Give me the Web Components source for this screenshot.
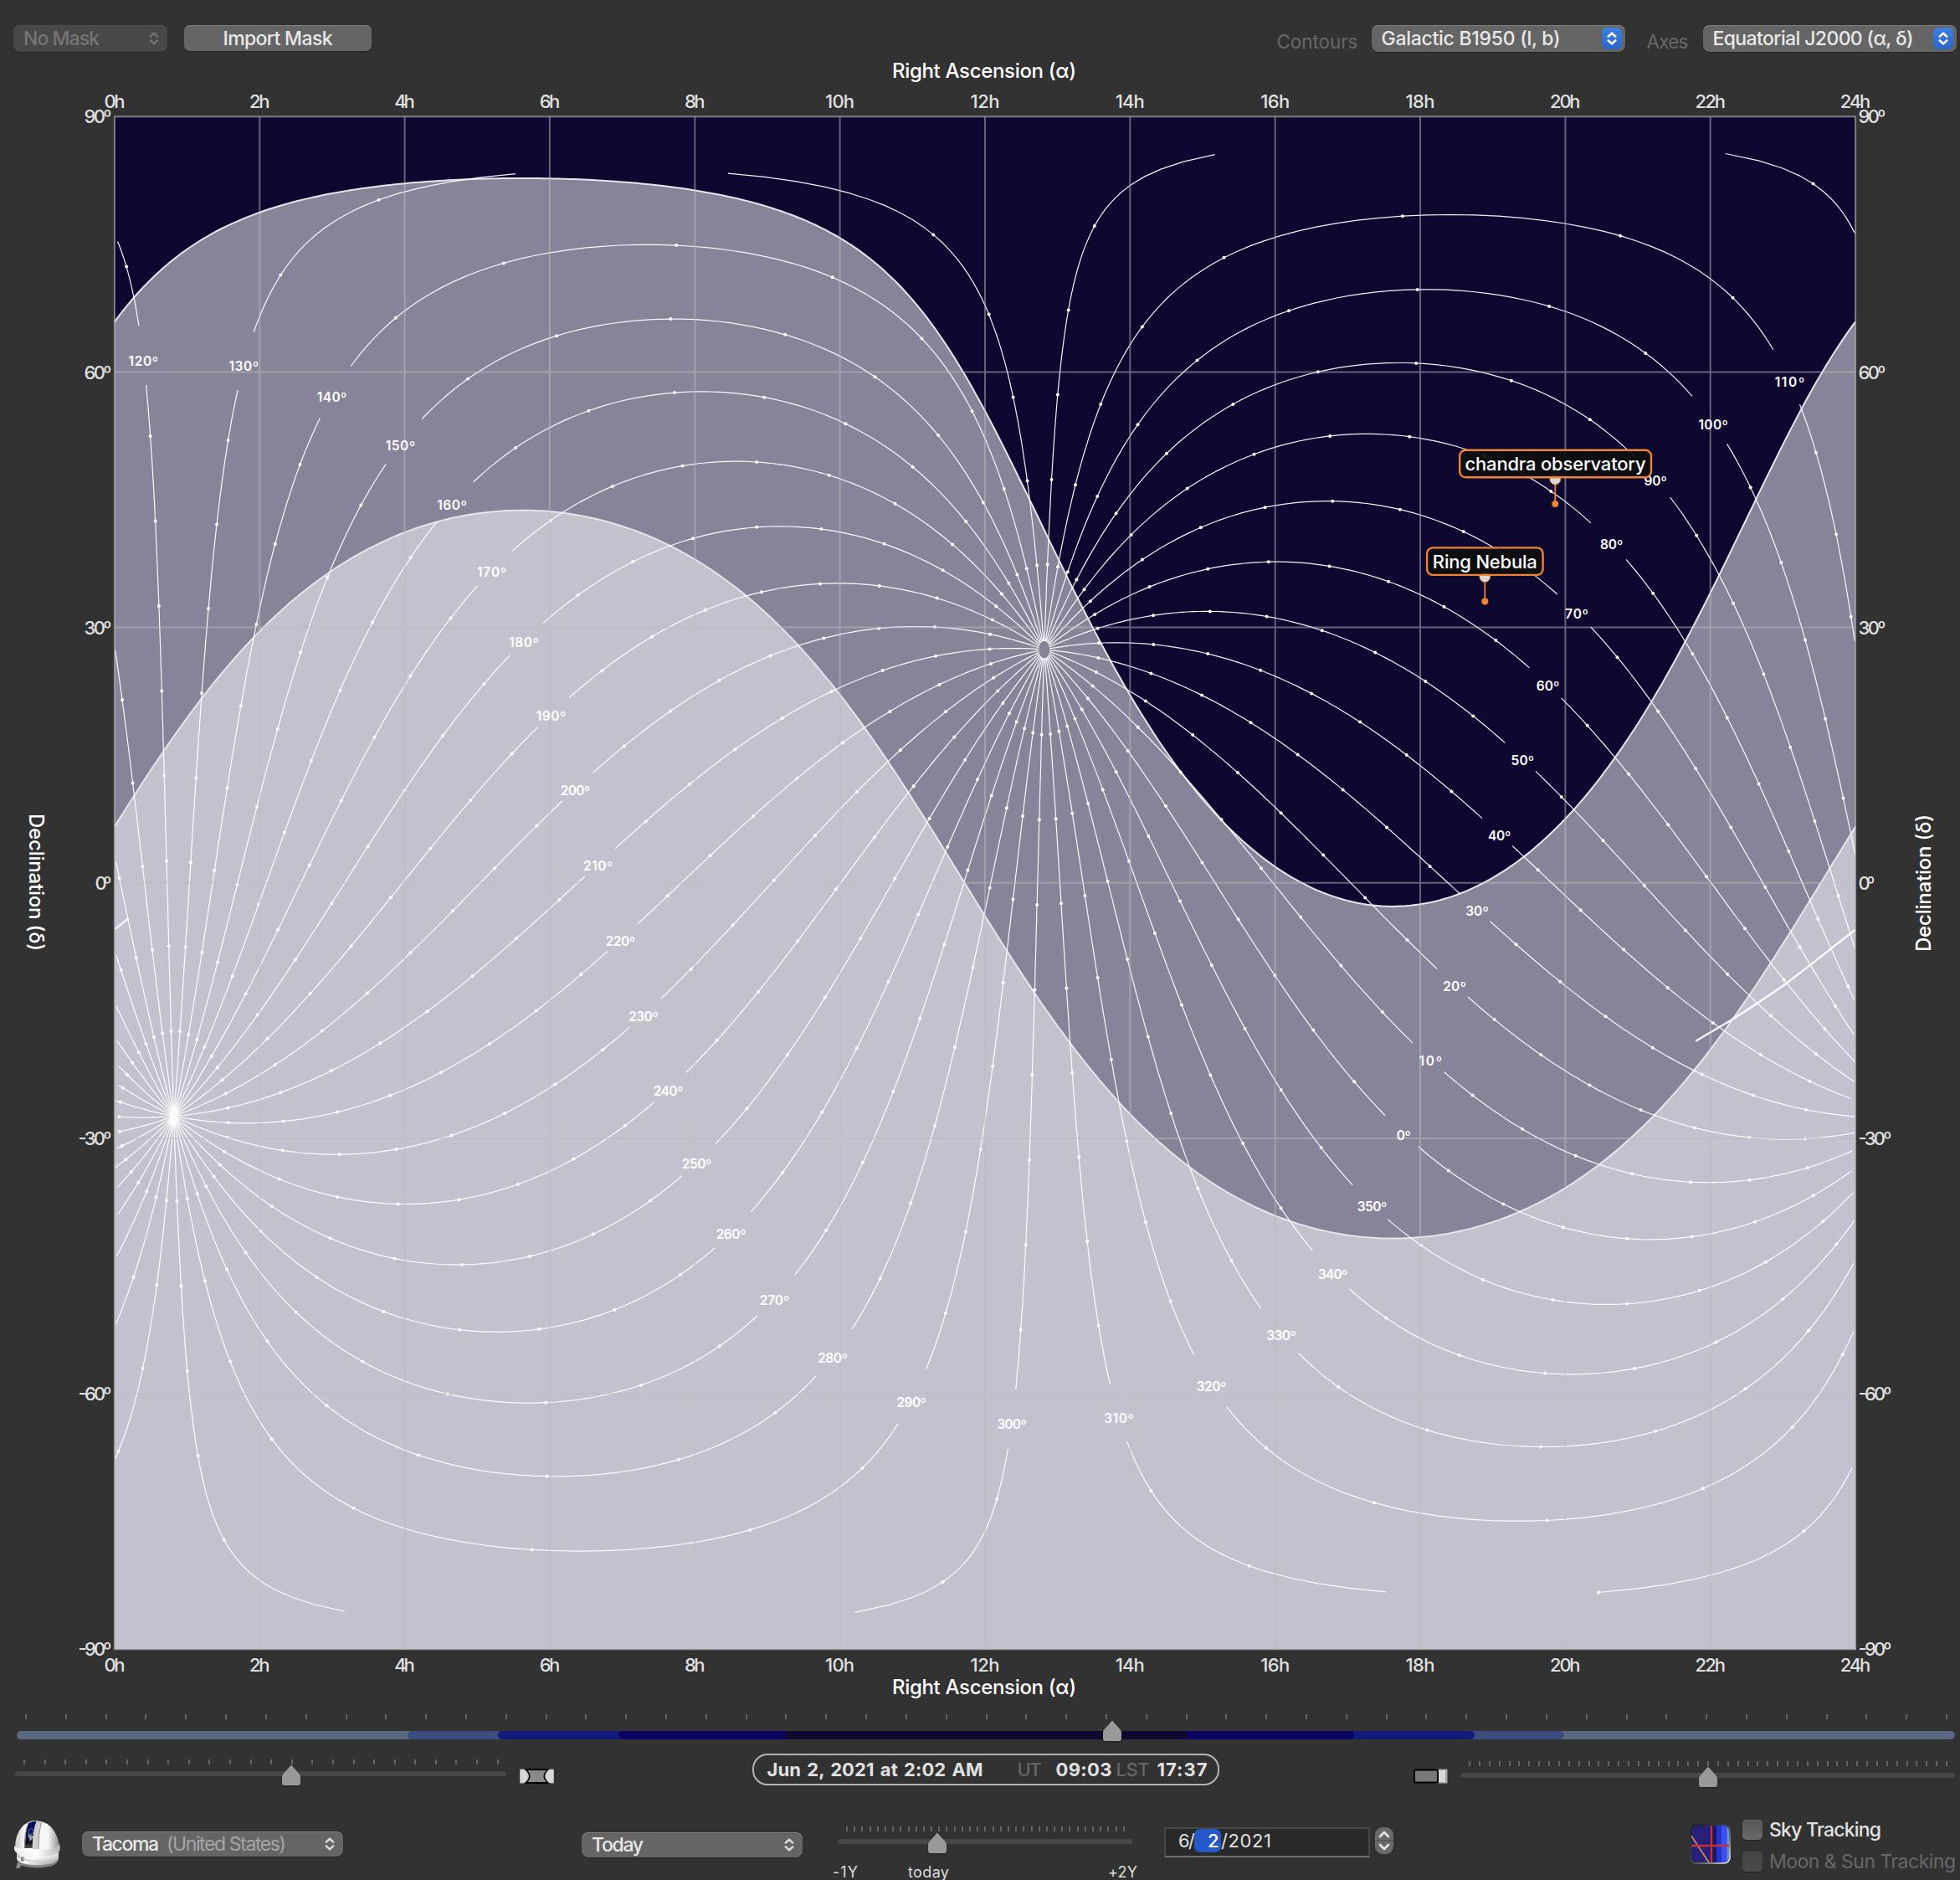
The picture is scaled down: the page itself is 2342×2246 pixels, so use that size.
<!DOCTYPE html>
<html lang="en">
<head>
<meta charset="utf-8">
<title>Sky Map</title>
<style>
  html, body { margin: 0; padding: 0; background: #323232; }
  body { width: 2342px; height: 2246px; overflow: hidden; font-family: Inter, "Liberation Sans", sans-serif; color: #e2e2e2; }
</style>
</head>
<body>
<sky-app></sky-app>
<script>
const define = (name, cls) => customElements.define(name, cls);
class Base extends HTMLElement {
  connectedCallback() {
    if (this.shadowRoot) return;
    this.attachShadow({ mode: 'open' }).innerHTML = this.render();
    this.ready && this.ready();
  }
  a(n, d = '') { return this.getAttribute(n) ?? d; }
  render() { return ''; }
}

/* A run of text tracked so that it fills the width given in "w". */
define('fit-text', class extends Base {
  render() {
    return `<style>:host{display:inline-block;white-space:pre;flex:none;width:${this.a('w')}px}span{display:inline-block;white-space:pre}</style><span>${this.a('t')}</span>`;
  }
  ready() {
    const s = this.shadowRoot.querySelector('span');
    const n = [...s.textContent].length;
    const w = s.getBoundingClientRect().width;
    if (n > 1 && w) s.style.letterSpacing = ((+this.a('w') - w) / (n - 1)).toFixed(3) + 'px';
  }
});

const chevrons = (stroke, w = 2.4) => `<svg width="12" height="16" viewBox="0 0 12 16" fill="none" stroke="${stroke}" stroke-width="${w}" stroke-linecap="round" stroke-linejoin="round"><path d="M1.8 5.6 6 1.6l4.2 4M1.8 10.4 6 14.4l4.2-4"/></svg>`;

define('pop-up', class extends Base {
  render() {
    const off = this.hasAttribute('disabled'), blue = this.hasAttribute('accent');
    return `<style>
      :host{display:flex;box-sizing:border-box;flex:none;width:${this.a('w')}px;height:${this.a('h', 32)}px;padding:0 ${blue ? 3.5 : 10}px 0 12px;align-items:center;justify-content:space-between;border-radius:8px;font-size:23px;font-weight:500;
        background:${off ? '#484848' : '#656565'};color:${off ? '#757575' : '#e8e8e8'};
        box-shadow:inset 0 1px 0 ${off ? '#525252' : '#808080'},0 1px 1px rgba(0,0,0,.3)}
      .t{display:flex}
      .b{width:24px;height:26px;border-radius:6px;background:linear-gradient(#3f7fe3,#2c66c4);display:flex;align-items:center;justify-content:center}
    </style><div class="t"><slot></slot></div>${blue ? `<div class="b">${chevrons('#fff', 2.6)}</div>` : chevrons(off ? '#757575' : '#dcdcdc')}`;
  }
});

define('push-button', class extends Base {
  render() {
    return `<style>:host{display:flex;flex:none;width:${this.a('w')}px;height:31px;align-items:center;justify-content:center;border-radius:7px;background:#656565;color:#e8e8e8;font-size:23px;font-weight:500;box-shadow:inset 0 1px 0 #808080,0 1px 1px rgba(0,0,0,.3)}</style><slot></slot>`;
  }
});

define('tick-slider', class extends Base {
  render() {
    const n = +this.a('ticks'), th = +this.a('thick', 6);
    const bands = JSON.parse(this.a('bands', '[]'));
    const origin = +this.a('origin', 0);
    return `<style>
      :host{display:block;flex:none;position:relative;width:${this.a('w')}px}
      .ticks{display:flex;justify-content:space-between;padding:0 9px 0 10px;height:6px;margin-bottom:${this.a('gap', 8)}px}
      .ticks i{width:2px;height:6px;background:#646464}
      .track{position:relative;height:${th}px;border-radius:${th / 2}px;background:${this.a('color', '#474747')};overflow:hidden}
      .track b{position:absolute;top:0;bottom:0;border-radius:${th / 2}px}
      svg{position:absolute;overflow:visible;left:${this.a('thumb')}px;top:${this.a('rise', 7)}px;filter:drop-shadow(0 1px 1px rgba(0,0,0,.4))}
    </style>
    <div class="ticks">${'<i></i>'.repeat(n)}</div>
    <div class="track">${bands.map(([x0, x1, c]) => `<b style="left:${x0 - origin}px;width:${x1 - x0}px;background:${c}"></b>`).join('')}</div>
    <svg width="22" height="24" viewBox="0 0 22 24"><path d="M11 0C12 0 12.6 1 13.2 2L20.6 10.2Q22 12 22 14V21Q22 24 19 24H3Q0 24 0 21V14Q0 12 1.4 10.2L8.8 2C9.4 1 10 0 11 0Z" fill="#999"/></svg>`;
  }
});

define('zoom-wide-icon', class extends Base {
  render() {
    return `<style>:host,svg{display:block}</style><svg width="41" height="18" viewBox="0 0 41 18">
      <rect x="0" y="0.5" width="41" height="17" rx="1" fill="#b4b4b4"/><path d="M1 1.5H7Q12 9 7 16.5H1ZM40 1.5H34Q29 9 34 16.5H40Z" fill="#d8d8d8"/>
      <path d="M7 1H34Q24.500 9 34 17H7Q16.500 9 7 1Z" fill="#8a8a8a" stroke="#000" stroke-width="1.6"/>
      <path d="M7 1H34M7 17H34" stroke="#000" stroke-width="2"/></svg>`;
  }
});
define('zoom-narrow-icon', class extends Base {
  render() {
    return `<style>:host,svg{display:block}</style><svg width="41" height="18" viewBox="0 0 41 18">
      <rect x="28" y=".5" width="12.500" height="17" rx="1" fill="#aaa"/><rect x="30" y="2" width="8" height="14" fill="#d8d8d8"/>
      <rect x="1" y="1.500" width="28" height="15" rx=".6" fill="#7b787a" stroke="#000" stroke-width="2"/></svg>`;
  }
});

define('dome-icon', class extends Base {
  render() {
    return `<style>:host,svg{display:block;flex:none}</style><svg width="56" height="60" viewBox="0 0 56 60">
    <defs>
      <linearGradient id="d" x1="0" x2="1"><stop offset="0" stop-color="#c9c9c9"/><stop offset=".25" stop-color="#fff"/><stop offset=".75" stop-color="#f4f4f4"/><stop offset="1" stop-color="#8c8c8c"/></linearGradient>
      <linearGradient id="r" x1="0" x2="1"><stop offset="0" stop-color="#ececec"/><stop offset=".5" stop-color="#fff"/><stop offset="1" stop-color="#b5b5b5"/></linearGradient>
      <linearGradient id="s" x1="0" x2="1" y1="0" y2="1"><stop offset="0" stop-color="#e6e6e6"/><stop offset=".5" stop-color="#fafafa"/><stop offset="1" stop-color="#8e8e8e"/></linearGradient>
      <linearGradient id="b" x1="0" x2="0" y1="0" y2="1"><stop offset="0" stop-color="#0b1050"/><stop offset=".6" stop-color="#0a0f58"/><stop offset=".8" stop-color="#111"/><stop offset="1" stop-color="#555"/></linearGradient>
    </defs>
    <path d="M4 51L2 58H6L10 53Z" fill="#8a8d8f"/>
    <path d="M3 46Q3 57 27 57.500Q53 57 53 46Z" fill="#7d8183"/>
    <path d="M3 37V46Q6 54 28 54.500Q50 54 53 46V37Z" fill="url(#s)"/>
    <rect x="8" y="44.500" width="3.500" height="5" fill="#777"/>
    <path d="M1 34Q1 18 9 9Q16 1 26 1Q41 2 48 14Q53 22 54 33Q28 42 1 34Z" fill="url(#d)"/>
    <path d="M17 4Q21 1.500 27 1.500Q23 10 22 34H13Q13 14 17 4Z" fill="url(#b)"/>
    <circle cx="20" cy="14" r="3.200" fill="none" stroke="#5f6fb0" stroke-width="1"/>
    <path d="M16 17L24 20L19 26Z" fill="#9a9a9a"/>
    <path d="M27 1.500L33 2.500Q29 14 29 35H21.500Q22 12 27 1.500Z" fill="#cfcfcf"/>
    <path d="M33 2.500Q29 14 29 35" stroke="#8f8f8f" fill="none"/>
    <path d="M17 4Q12 14 12.500 34" stroke="#777" fill="none"/>
    <path d="M0 31Q4 36 27 36.500Q50 36 54 29Q55.500 33 54 38Q48 44 27 44Q5 43 .5 37Q-.5 34 0 31Z" fill="url(#r)"/>
    <path d="M3 40Q14 50 34 49Q14 52 3 45Z" fill="#aaa" opacity=".5"/>
    </svg>`;
  }
});

define('tracking-icon', class extends Base {
  render() {
    return `<style>:host,svg{display:block;flex:none}</style><svg width="50" height="50" viewBox="0 0 50 50">
    <defs><clipPath id="c"><rect x="2" y="2" width="45" height="44" rx="6"/></clipPath>
    <linearGradient id="e" x1="0" y1="0" x2="1" y2="1"><stop offset="0" stop-color="#1c1c1c"/><stop offset=".5" stop-color="#444"/><stop offset="1" stop-color="#fff"/></linearGradient></defs>
    <rect x="1" y="1" width="47" height="46" rx="7" fill="none" stroke="url(#e)" stroke-width="1.6"/>
    <g clip-path="url(#c)"><rect width="30" height="50" fill="#262078"/><rect x="27" width="6" height="50" fill="#1d1a5c"/><rect x="32" width="6" height="50" fill="#2532cf"/><rect x="38" width="7" height="50" fill="#3b50ee"/><rect x="44.500" width="5" height="50" fill="#6390d8"/>
    <path d="M2 14.500L23 46" stroke="#d5885a" stroke-width="1.800"/>
    <path d="M26 2V46" stroke="#d02c36" stroke-width="2.200"/><path d="M2 26H47" stroke="#c5303a" stroke-width="2.400"/></g></svg>`;
  }
});

define('check-box', class extends Base {
  render() {
    const off = this.hasAttribute('disabled');
    return `<style>:host{display:flex;align-items:center;height:24px;font-size:23px;font-weight:${off ? 400 : 500};color:${off ? '#686868' : '#e2e2e2'}}
    i{width:24px;height:24px;margin-right:8px;border-radius:5px;background:${off ? 'linear-gradient(#434343,#4b4b4b)' : 'linear-gradient(#565656,#6a6a6a)'};box-shadow:inset 0 1px 0 ${off ? '#4c4c4c' : '#6c6c6c'},0 1px 1px rgba(0,0,0,.3)}</style><i></i><slot></slot>`;
  }
});

define('stepper-control', class extends Base {
  render() {
    return `<style>:host{display:block;flex:none;width:22px;height:32px}svg{display:block}</style><svg width="22" height="32" viewBox="0 0 22 32"><rect width="22" height="32" rx="9" fill="#6a6a6a"/><path d="M0 16H22" stroke="#555" stroke-width="1.500"/><path d="M6 11L11 6L16 11M6 21L11 26L16 21" fill="none" stroke="#e6e6e6" stroke-width="2.600" stroke-linecap="round" stroke-linejoin="round"/></svg>`;
  }
});

define('clock-readout', class extends Base {
  render() {
    return `<style>:host{display:flex;box-sizing:border-box;width:558px;height:38px;border:2px solid #b4b4b4;border-radius:18px;padding-left:16px;align-items:center;font-size:22px;font-weight:700;color:#e0e0e0}
    .g{color:#666;font-weight:500}</style>
    <fit-text w="258" t="Jun 2, 2021 at 2:02 AM" style="word-spacing:2px"></fit-text><fit-text class="g" style="margin-left:41px" w="29" t="UT"></fit-text><fit-text style="margin-left:17px" w="67" t="09:03"></fit-text><fit-text class="g" style="margin-left:5px" w="40" t="LST"></fit-text><fit-text style="margin-left:9px" w="60" t="17:37"></fit-text>`;
  }
});

define('date-field', class extends Base {
  render() {
    return `<style>:host{display:flex;box-sizing:border-box;flex:none;width:246px;height:36px;border:2px solid #484848;border-bottom-color:#707070;background:#292929;align-items:flex-start;padding-left:15px;font-size:22px;line-height:28px;color:#e2e2e2}
    .s{background:#2558c9;border-radius:7px;width:32px;height:28px;box-sizing:border-box;padding-left:16px;margin:0 0 0 -1px;color:#fff;font-weight:500}</style>
    <fit-text w="20" t="6/"></fit-text><div class="s">2</div><fit-text w="60" t="/2021"></fit-text>`;
  }
});

define('sky-chart', class extends Base {
  render() {
    const X0 = 136.9, Y0 = 139.3, KX = 2080.2 / 360, KY = 1831 / 180, D = Math.PI / 180;
    const X1 = X0 + 2080.2, Y1 = Y0 + 1831;
    const px = ra => X0 + ra * KX, py = de => Y0 + (90 - de) * KY, f = v => v.toFixed(1);
    const gal = (l, b) => {
      const dg = 27.4 * D, h = (123 - l) * D; b *= D;
      const de = Math.asin(Math.sin(b) * Math.sin(dg) + Math.cos(b) * Math.cos(dg) * Math.cos(h));
      let ra = 192.25 + Math.atan2(Math.cos(b) * Math.sin(h), Math.sin(b) * Math.cos(dg) - Math.cos(b) * Math.sin(dg) * Math.cos(h)) / D;
      return [(ra % 360 + 360) % 360, de / D];
    };
    let lines = '', dots = '', labels = '';
    for (let l = 0; l < 360; l += 10) {
      for (const [from, to] of [[89, 3], [-4, -90]]) {
        let prev = null, run = [];
        const flush = () => { if (run.length > 1) lines += 'M' + run.map(p => f(px(p[0])) + ' ' + f(py(p[1]))).join('L'); run = []; };
        for (let b = from; b >= to; b--) {
          const p = gal(l, b);
          if (prev && Math.abs(p[0] - prev[0]) > 8) flush();
          run.push(p); prev = p;
          /* A dot belongs to the segment that leaves its point. */
          if (b % 10 === 0 && b > -90 && Math.abs(gal(l, b - 1)[0] - p[0]) <= 8) dots += `<circle cx="${f(px(p[0]))}" cy="${f(py(p[1]))}" r="2"/>`;
        }
        flush();
      }
      const c = gal(l, -1), w = l > 99 ? 35.5 : l > 9 ? 27.5 : 17;
      labels += `<text x="${f(px(c[0]) - w / 2)}" y="${f(py(c[1]) + 7.2)}" textLength="${w}">${l}º</text>`;
    }
    const phi = 47.24 * D, lst = 17.62 * 15;
    const altCurve = alt => {
      let s = '';
      for (let ra = 0; ra <= 360; ra += 1) {
        const h = (lst - ra) * D, A = Math.sin(phi), B = Math.cos(phi) * Math.cos(h);
        const de = (Math.asin(Math.sin(alt * D) / Math.hypot(A, B)) - Math.atan2(B, A)) / D;
        s += (s ? 'L' : 'M') + f(px(ra)) + ' ' + f(py(de));
      }
      return s;
    };
    const hi = altCurve(40), lo = altCurve(1), close = `L${X1} ${Y1}L${X0} ${Y1}Z`;
    let grid = '', ticks = '';
    for (let h = 0; h <= 24; h += 2) {
      const x = px(h * 15), w = h === 0 ? 25 : h < 10 ? 24.500 : h < 20 ? 35 : 36.500;
      if (h && h < 24) grid += `M${f(x)} ${Y0}V${Y1}`;
      for (const y of [129.300, 1996.500]) ticks += `<text x="${f(x - w / 2)}" y="${y}" textLength="${w}">${h}h</text>`;
    }
    for (let d = 90; d >= -90; d -= 30) {
      const y = py(d), w = d === 0 ? 20 : d > 0 ? 33 : 40;
      if (Math.abs(d) < 90) grid += `M${X0} ${f(y)}H${X1}`;
      ticks += `<text x="${133.500 - w}" y="${f(y + 8)}" textLength="${w}">${d}º</text><text x="2220.500" y="${f(y + 8)}" textLength="${w}">${d}º</text>`;
    }
    const tag = (x, y, w, t, tw, cx, ball, end) => `
      <path d="M${cx} ${ball}V${end}" stroke="#ee8432" stroke-width="1.800"/><circle cx="${cx}" cy="${ball}" r="6.400" fill="#d8d8d8" stroke="#ee8432" stroke-width=".8"/><circle cx="${cx}" cy="${end}" r="4" fill="#ee8432"/>
      <rect x="${x}" y="${y}" width="${w}" height="32.500" rx="7" fill="#0f0f10" fill-opacity=".94" stroke="#ee8432" stroke-width="2.400"/>
      <text x="${x + (w - tw) / 2}" y="${y + 24.200}" textLength="${tw}" fill="#fff" font-size="22" font-weight="500">${t}</text>`;
    return `<style>:host{display:block}svg{display:block}text{font-family:Inter,"Liberation Sans",sans-serif}</style>
    <svg width="2342" height="1974" viewBox="0 66 2342 1974">
      <rect x="${X0}" y="${Y0}" width="2080.2" height="1831" fill="#0e0730"/>
      <path d="${hi}${close}" fill="#878399"/><path d="${lo}${close}" fill="#c4c1ce"/>
      <path d="${hi}${lo}" fill="none" stroke="#e6e5ea" stroke-width="2"/>
      <path d="${lines}" fill="none" stroke="#fff" stroke-width="1.200" stroke-opacity=".95"/>
      <g fill="#fff">${dots}</g>
      <path d="M2026.300 1243.700L2067.700 1219.300Q2100 1199 2135 1174.500L2217 1110.700M137.500 1110L153.500 1097.200" fill="none" stroke="#fff" stroke-width="2.200"/>
      <path d="${grid}" stroke="#bebebe" stroke-opacity=".5" stroke-width="2"/>
      <rect x="${X0}" y="${Y0}" width="2080.2" height="1831" fill="none" stroke="#bebebe" stroke-opacity=".6" stroke-width="2"/>
      <g fill="#fff" font-size="15.500" font-weight="600">${labels}</g>
      <g fill="#e0e0e0" font-size="22" font-weight="500">${ticks}</g>
      <g fill="#fff" font-size="24" font-weight="500">
        <text x="1066" y="93" textLength="220">Right Ascension (α)</text><text x="1066" y="2024.300" textLength="220">Right Ascension (α)</text>
        <text transform="translate(35 972) rotate(90)" textLength="164">Declination (δ)</text><text transform="translate(2307 1137) rotate(-90)" textLength="164">Declination (δ)</text>
      </g>
      ${tag(1744.200, 537.800, 228.800, 'chandra observatory', 216, 1858.300, 572.500, 602)}
      ${tag(1705.100, 654.400, 138.500, 'Ring Nebula', 125, 1774.300, 689, 718.600)}
    </svg>`;
  }
});

define('sky-app', class extends Base {
  render() {
    return `<style>
      :host{display:flex;flex-direction:column;width:2342px;height:2246px;overflow:hidden}
      .bar{display:flex;height:36px;padding:30px 0 0 16px;flex:none}
      .gap{flex:1}
      .lab{font-size:22.500px;color:#686868;line-height:40px;font-weight:400}
      .row{display:flex;flex:none;align-items:flex-start}
      .cap{font-size:18px;line-height:20px;color:#dedede;display:flex;margin-top:24px}
      .dim{color:#a5a5a5;margin-left:9px;font-weight:400}
    </style>
    <div class="bar">
      <pop-up w="184" disabled><fit-text w="91" t="No Mask"></fit-text></pop-up>
      <push-button w="224" style="margin-left:20px"><fit-text w="131" t="Import Mask"></fit-text></push-button>
      <div class="gap"></div>
      <fit-text class="lab" w="97" t="Contours"></fit-text>
      <pop-up w="303" accent style="margin:0 26px 0 16px"><fit-text w="214" t="Galactic B1950 (l, b)"></fit-text></pop-up>
      <fit-text class="lab" w="50" t="Axes"></fit-text>
      <pop-up w="303" accent style="margin:0 4.500px 0 17px"><fit-text w="240" t="Equatorial J2000 (α, δ)"></fit-text></pop-up>
    </div>
    <sky-chart></sky-chart>
    <div class="row" style="height:55px;padding:8px 0 0 20px;box-sizing:border-box">
      <tick-slider w="2316" ticks="49" gap="14" thick="10" rise="8" thumb="1298" origin="20" color="#5a6780"
        bands='[[487,1869,"#3b4d7f"],[594.5,1762,"#131c7b"],[738.5,1617.5,"#090463"],[937,1419,"#0f0830"]]'></tick-slider>
    </div>
    <div class="row" style="height:79px">
      <tick-slider w="587" ticks="24" thumb="319" style="margin:7px 15px 0 18px"></tick-slider>
      <zoom-wide-icon style="margin:18px 237px 0 0.500px"></zoom-wide-icon>
      <clock-readout></clock-readout>
      <zoom-narrow-icon style="margin:18px 15.500px 0 232px"></zoom-narrow-icon>
      <tick-slider w="591" ticks="49" thumb="285" style="margin-top:9px"></tick-slider>
    </div>
    <div class="row">
      <dome-icon style="margin:0 25px 0 17px"></dome-icon>
      <pop-up w="312" h="30" style="margin-top:14px"><fit-text w="80" t="Tacoma"></fit-text><fit-text class="dim" w="143" t="(United States)"></fit-text></pop-up>
      <pop-up w="264" h="30" style="margin:15px 42px 0 285px"><fit-text w="62" t="Today"></fit-text></pop-up>
      <div style="padding-top:8px;width:352px">
        <tick-slider w="352" ticks="37" gap="9" rise="8" thumb="108"></tick-slider>
        <div class="cap"><fit-text w="30" t="-1Y" style="margin-left:-6px"></fit-text><fit-text w="49" t="today" style="margin-left:60px"></fit-text><fit-text w="35" t="+2Y" style="margin-left:190px"></fit-text></div>
      </div>
      <date-field style="margin:9px 6px 0 38px"></date-field>
      <stepper-control style="margin-top:9px"></stepper-control>
      <tracking-icon style="margin:5px 13px 0 354px"></tracking-icon>
      <div style="display:flex;flex-direction:column;gap:14px">
        <check-box><fit-text w="134" t="Sky Tracking"></fit-text></check-box>
        <check-box disabled><fit-text w="223" t="Moon &amp;amp; Sun Tracking"></fit-text></check-box>
      </div>
    </div>`;
  }
});
</script>
</body>
</html>
